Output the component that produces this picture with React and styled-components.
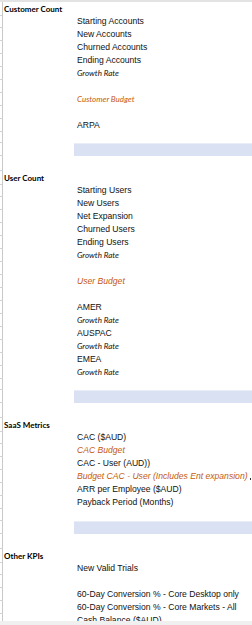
import React from "react"
import styled, { createGlobalStyle } from "styled-components"

const GlobalStyle = createGlobalStyle`
  body {
    margin: 0;
    background: #fff;
    font-family: "Liberation Sans", Arial, sans-serif;
  }
`

const Sheet = styled.main`
  width: 252px;
  display: flex;
  flex-direction: column;
  border-top: 2px solid #e3e3e3;
  overflow: hidden;
`

const Row = styled.div`
  display: grid;
  grid-template-columns: 3px 71px 1fr;
  height: ${p => p.$h || 13}px;
`

const Gutter = styled.div`
  border-right: 1px solid #c9c9c9;
  border-bottom: 1px solid #d4d4d4;
`

const Head = styled.div`
  padding-left: 1px;
  padding-top: 1px;
  font-family: Lato, "Open Sans", sans-serif;
  font-weight: 700;
  font-size: 8px;
  line-height: 13px;
  color: #000;
  white-space: nowrap;
`

const Label = styled.div`
  padding-left: 3px;
  font-size: 8.6px;
  line-height: 13px;
  color: #111;
  white-space: nowrap;
  background: ${p => (p.$band ? "#d9e1f2" : "transparent")};
  ${p => p.$band && "border-top: 1px solid #e8edf7;"}
  ${p => p.$italic && "font-style: italic;"}
  ${p => p.$budget && "color: #c55a11;"}
  ${p => p.$calibri && "font-family: Lato, \"Open Sans\", sans-serif; font-size: 8px;"}
`

const Stray = styled.span`
  display: inline-block;
  width: 1px;
  height: 2px;
  margin-left: 2px;
  vertical-align: -1px;
  background: #333;
`

const ScrollEdge = styled.div`
  position: fixed;
  left: 0;
  right: 0;
  bottom: 0;
  height: 4px;
  background: #f0f0f0;
`

const rate = { label: "Growth Rate", italic: true, calibri: true }

const rows = [
  { head: "Customer Count" },
  { label: "Starting Accounts" },
  { label: "New Accounts" },
  { label: "Churned Accounts" },
  { label: "Ending Accounts" },
  rate,
  {},
  { label: "Customer Budget", italic: true, calibri: true, budget: true },
  {},
  { label: "ARPA" },
  { h: 11 },
  { band: true },
  { h: 15 },
  { head: "User Count" },
  { label: "Starting Users" },
  { label: "New Users" },
  { label: "Net Expansion" },
  { label: "Churned Users" },
  { label: "Ending Users" },
  rate,
  {},
  { label: "User Budget", italic: true, budget: true },
  {},
  { label: "AMER" },
  rate,
  { label: "AUSPAC" },
  rate,
  { label: "EMEA" },
  rate,
  { h: 11 },
  { band: true },
  { h: 15 },
  { head: "SaaS Metrics" },
  { label: "CAC ($AUD)" },
  { label: "CAC Budget", italic: true, budget: true },
  { label: "CAC - User (AUD))" },
  { label: "Budget CAC  - User (Includes Ent expansion)", italic: true, budget: true, stray: true },
  { label: "ARR per Employee ($AUD)" },
  { label: "Payback Period (Months)" },
  { h: 12 },
  { band: true, h: 13 },
  { h: 15 },
  { head: "Other KPIs" },
  { label: "New Valid Trials" },
  {},
  { label: "60-Day Conversion % - Core Desktop only" },
  { label: "60-Day Conversion % - Core Markets - All" },
  { label: "Cash Balance ($AUD)" },
]

export default function App() {
  return (
    <>
      <GlobalStyle />
      <Sheet>
        {rows.map((r, i) => (
          <Row key={i} $h={r.h}>
            <Gutter />
            <Head>{r.head}</Head>
            <Label
              $band={r.band}
              $italic={r.italic}
              $budget={r.budget}
              $calibri={r.calibri}
            >
              {r.label}
              {r.stray && <Stray />}
            </Label>
          </Row>
        ))}
      </Sheet>
      <ScrollEdge />
    </>
  )
}
